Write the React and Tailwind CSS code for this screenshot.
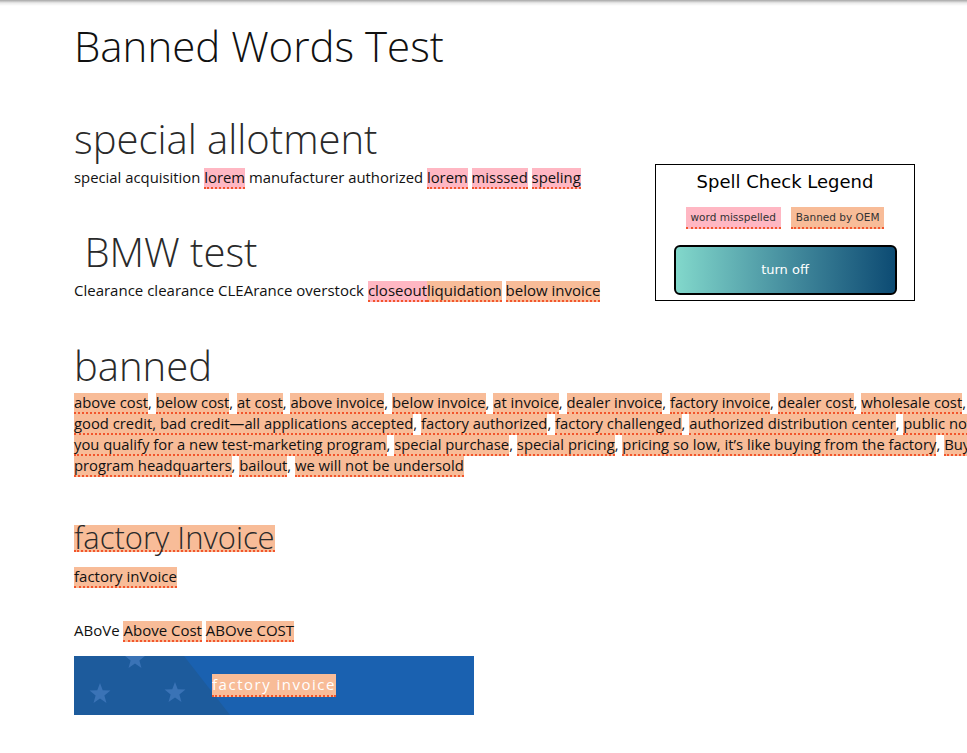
import React from "react";

const body = { fontFamily: '"Open Sans", "Noto Sans", sans-serif' };
const legendFont = { fontFamily: '"DejaVu Sans", "Noto Sans", sans-serif' };

function Pink({ children }) {
  return (
    <span className="inline-block -mb-px leading-[19px] bg-[#ffb7c3] border-b-2 border-dotted border-[#f2552c]">
      {children}
    </span>
  );
}
function Ban({ children }) {
  return (
    <span className="inline-block -mb-px leading-[19px] bg-[#f8bc98] border-b-2 border-dotted border-[#f2552c]">
      {children}
    </span>
  );
}

const lines = [
  ["above cost", "below cost", "at cost", "above invoice", "below invoice", "at invoice", "dealer invoice", "factory invoice", "dealer cost", "wholesale cost", "invoice price"],
  ["good credit, bad credit\u2014all applications accepted", "factory authorized", "factory challenged", "authorized distribution center", "public notice"],
  ["you qualify for a new test-marketing program", "special purchase", "special pricing", "pricing so low, it\u2019s like buying from the factory", "Buy like a dealer"],
  ["program headquarters", "bailout", "we will not be undersold"],
];

function Star({ x, y, r }) {
  const pts = [];
  for (let i = 0; i < 10; i++) {
    const ang = -Math.PI / 2 + (i * Math.PI) / 5;
    const rr = i % 2 === 0 ? r : r * 0.42;
    pts.push(`${(x + rr * Math.cos(ang)).toFixed(2)},${(y + rr * Math.sin(ang)).toFixed(2)}`);
  }
  return <polygon points={pts.join(" ")} fill="#3a73b6" />;
}

export default function App() {
  return (
    <div className="relative w-[967px] h-[753px] overflow-hidden bg-white text-[#111]" style={body}>
      <div className="absolute inset-x-0 top-0 h-[6px] bg-gradient-to-b from-[rgba(0,0,0,0.35)] via-[rgba(0,0,0,0.08)] to-transparent" />
      <div className="pl-[74px] pt-[21px]">
        <h1 className="text-[42px] leading-[50px] font-light text-[#111]">Banned Words Test</h1>

        <h2 className="mt-[44px] text-[40px] leading-[48px] font-light text-[#2a2a2a]">special allotment</h2>
        <p className="mt-[4px] text-[14.85px] leading-[21px] whitespace-nowrap">
          special acquisition <Pink>lorem</Pink> manufacturer authorized <Pink>lorem</Pink>{" "}
          <Pink>misssed</Pink> <Pink>speling</Pink>
        </p>

        <h2 className="mt-[40px] text-[40px] leading-[48px] font-light text-[#2a2a2a] whitespace-pre">{" BMW test"}</h2>
        <p className="mt-[4px] text-[15px] leading-[21px] whitespace-nowrap">
          Clearance clearance CLEArance overstock <Pink>closeout</Pink>
          <Ban>liquidation</Ban> <Ban>below invoice</Ban>
        </p>

        <h2 className="mt-[41px] text-[40px] leading-[48px] font-light text-[#2a2a2a]">banned</h2>
        <p className="mt-[2px] text-[14.8px] leading-[21px] whitespace-nowrap">
          {lines.map((ln, li) => (
            <React.Fragment key={li}>
              {ln.map((w, i) => (
                <React.Fragment key={i}>
                  <Ban>{w}</Ban>
                  {i < ln.length - 1 || li < lines.length - 1 ? ", " : ""}
                </React.Fragment>
              ))}
              {li < lines.length - 1 ? <br /> : null}
            </React.Fragment>
          ))}
        </p>

        <h2 className="mt-[49px] w-fit text-[31px] leading-[25px] font-light text-[#2a2a2a] bg-[#f8bc98] border-b-2 border-dotted border-[#f2552c]">
          factory Invoice
        </h2>
        <p className="mt-[14px] text-[15px] leading-[21px]">
          <Ban>factory inVoice</Ban>
        </p>

        <p className="mt-[33px] text-[15px] leading-[21px]">
          ABoVe <Ban>Above Cost</Ban> <Ban>ABOve COST</Ban>
        </p>

        <div className="relative mt-[15px] w-[400px] h-[59px] bg-[#1a61b0] overflow-hidden flex items-center justify-center">
          <svg className="absolute left-0 top-0" width="400" height="59" viewBox="0 0 400 59">
            <polygon points="0,0 110,0 156,59 0,59" fill="#1d5b9c" />
            <Star x={61} y={3} r={11} />
            <Star x={26} y={38} r={11} />
            <Star x={101} y={37} r={11} />
          </svg>
          <span className="relative inline-block text-white text-[15px] leading-[21px] tracking-[1.5px] bg-[#f8bc98] border-b-2 border-dotted border-[#f2552c]">
            factory invoice
          </span>
        </div>
      </div>

      <div className="absolute left-[655px] top-[164px] w-[260px] h-[137px] border border-black bg-white flex flex-col items-center">
        <div className="mt-[5px] text-[18px] leading-[24px] text-black" style={legendFont}>
          Spell Check Legend
        </div>
        <div className="mt-[13px] flex gap-[10px] text-[10.5px] leading-[20px] text-[#333]" style={legendFont}>
          <span className="px-[5px] bg-[#ffb7c3] border-b-2 border-dotted border-[#f2552c]">word misspelled</span>
          <span className="px-[5px] bg-[#f8bc98] border-b-2 border-dotted border-[#f2552c]">Banned by OEM</span>
        </div>
        <button
          className="mt-[16px] w-[223px] h-[50px] rounded-[6px] border-2 border-black bg-gradient-to-r from-[#82d8cb] to-[#0c4b73] text-white text-[13px]"
          style={legendFont}
        >
          turn off
        </button>
      </div>
    </div>
  );
}
